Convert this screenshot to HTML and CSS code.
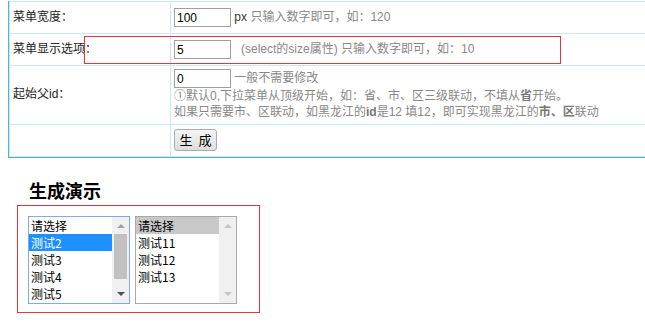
FILE: index.html
```html
<!DOCTYPE html>
<html lang="zh-CN">
    <head>
        <meta charset="UTF-8">
        <meta name="viewport" content="width=device-width, initial-scale=1.0">
        <title>联动菜单生成</title>
        <link rel="stylesheet" href="styles.css">
    </head>
    <body>

        <div class="form-wrap">
            <table class="form-table">
                <tr>
                    <td class="label">菜单宽度：</td>
                    <td><input class="num" type="text" value="100"> <span class="unit">px</span> <span class="tip">只输入数字即可，如：120</span></td>
                </tr>
                <tr>
                    <td class="label">菜单显示选项：</td>
                    <td><input class="num" type="text" value="5"> &nbsp;&nbsp;<span class="tip">(select的size属性) 只输入数字即可，如：10</span></td>
                </tr>
                <tr class="tall">
                    <td class="label">起始父id：</td>
                    <td>
                        <input class="num" type="text" value="0"> <span class="tip">一般不需要修改</span>
                        <div class="tip note">①默认0,下拉菜单从顶级开始，如：省、市、区三级联动，不填从<b>省</b>开始。<br>如果只需要市、区联动，如黑龙江的<b>id</b>是12 填12，即可实现黑龙江的<b>市、区</b>联动</div>
                    </td>
                </tr>
                <tr class="last">
                    <td class="label"></td>
                    <td class="btn-cell"><button class="btn" type="button">生 成</button></td>
                </tr>
            </table>
            <div class="mark"></div>
        </div>

        <div class="demo">
            <h3>生成演示</h3>
            <div class="demo-box">
                <div class="listbox focused">
                    <ul class="options">
                        <li>请选择</li>
                        <li class="selected">测试2</li>
                        <li>测试3</li>
                        <li>测试4</li>
                        <li>测试5</li>
                    </ul>
                    <div class="scrollbar">
                        <span class="arrow up"></span>
                        <span class="thumb"></span>
                        <span class="arrow down"></span>
                    </div>
                </div>
                <div class="listbox">
                    <ul class="options">
                        <li class="selected grey">请选择</li>
                        <li>测试11</li>
                        <li>测试12</li>
                        <li>测试13</li>
                    </ul>
                    <div class="scrollbar off">
                        <span class="arrow up"></span>
                        <span class="arrow down"></span>
                    </div>
                </div>
            </div>
        </div>

    </body>
</html>
```

FILE: styles.css
```css
body {
    margin: 0;
    font-family: "Liberation Sans", "Noto Sans CJK SC", sans-serif;
    font-size: 12px;
    color: #222;
    background-color: #fff;
    overflow: hidden;
}
.form-wrap {
    position: relative;
    padding-left: 8px;
    padding-top: 1px;
}
.form-table {
    width: 700px;
    border-spacing: 0;
    border: 1px solid #4db3e6;
    border-top: none;
}
.form-table td {
    border-top: 1px solid #c8e9f8;
    border-left: 1px solid #c8e9f8;
    padding: 6px 3px;
    line-height: 19px;
    vertical-align: middle;
}
.form-table .label {
    width: 154px;
    padding-left: 3px;
}
.form-table .tall td {
    padding: 3px 3px 4px;
}
.form-table .last td {
    border-bottom: 1px solid #c8e9f8;
}
.form-table .btn-cell {
    padding: 4px 3px 5px;
}
.num {
    box-sizing: border-box;
    width: 57px;
    height: 19px;
    margin: 0;
    padding: 0 2px;
    border: 1px solid #a0a0a0;
    font-family: "Liberation Sans", sans-serif;
    font-size: 12px;
    color: #000;
    vertical-align: top;
}
.unit {
    color: #333;
}
.tip {
    color: #888;
}
.note {
    line-height: 16px;
}
.note b {
    color: #777;
}
.btn {
    box-sizing: border-box;
    height: 22px;
    width: 43px;
    padding: 0 0 0 1px;
    margin: 0;
    border: 1px solid #acacac;
    border-radius: 3px;
    background: linear-gradient(#f4f4f4, #dedede);
    font-family: "Noto Sans CJK SC", sans-serif;
    font-size: 13px;
    line-height: 20px;
    letter-spacing: 1px;
    word-spacing: 1px;
    color: #000;
    vertical-align: top;
}
.mark {
    position: absolute;
    left: 84px;
    top: 36px;
    width: 477px;
    height: 28px;
    box-sizing: border-box;
    border: 1px solid #e8333a;
}
.demo {
    margin-left: 17px;
}
.demo h3 {
    margin: 20px 0 3px 12px;
    font-family: "Noto Sans CJK SC", sans-serif;
    font-size: 18px;
    line-height: 24px;
    color: #000;
}
.demo-box {
    display: inline-flex;
    gap: 5px;
    padding: 10px 22px 8px 10px;
    border: 1px solid #e8333a;
}
.listbox {
    display: flex;
    width: 102px;
    height: 88px;
    box-sizing: border-box;
    border: 1px solid #a9a9a9;
    background-color: #fff;
}
.listbox.focused {
    border-color: #7fabe6;
}
.options {
    flex: 1;
    margin: 0;
    padding: 0;
    list-style: none;
    overflow: hidden;
    font-family: "Noto Sans CJK SC", sans-serif;
    color: #000;
}
.options li {
    height: 17px;
    line-height: 17px;
    padding-left: 2px;
    white-space: nowrap;
}
.options .selected {
    background-color: #1e90ff;
    color: #fff;
}
.options .selected.grey {
    background-color: #c8c8c8;
    color: #000;
}
.scrollbar {
    position: relative;
    width: 17px;
    background-color: #f0f0f0;
}
.arrow {
    position: absolute;
    left: 5px;
    width: 0;
    height: 0;
    border-left: 4px solid transparent;
    border-right: 4px solid transparent;
}
.arrow.up {
    top: 7px;
    border-bottom: 4px solid #a3a3a3;
}
.arrow.down {
    bottom: 7px;
    border-top: 4px solid #505050;
}
.scrollbar.off .arrow.up {
    border-bottom-color: #c3c3c3;
}
.scrollbar.off .arrow.down {
    border-top-color: #c3c3c3;
}
.thumb {
    position: absolute;
    left: 2px;
    top: 17px;
    width: 13px;
    height: 45px;
    background-color: #c1c1c1;
}
```
